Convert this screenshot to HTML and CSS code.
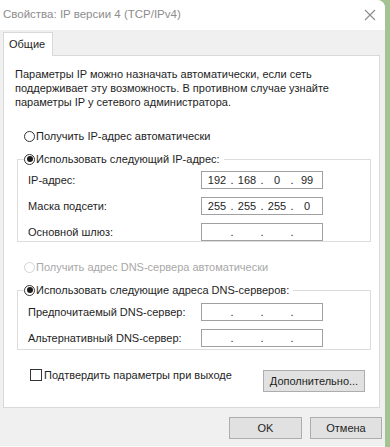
FILE: index.html
```html
<!DOCTYPE html>
<html lang="ru">
<head>
<meta charset="utf-8">
<link rel="stylesheet" href="styles.css">
</head>
<body>
<div class="window">
  <div class="titlebar">
    <span class="title">Свойства: IP версии 4 (TCP/IPv4)</span>
    <svg class="close" width="12" height="12" viewBox="0 0 12 12"><path d="M1 1L11 11M11 1L1 11" stroke="#8c8c8c" stroke-width="1.1" fill="none"/></svg>
  </div>
  <div class="body">
    <div class="tabs"><div class="tab">Общие</div></div>
    <div class="panel">
      <p class="intro">Параметры IP можно назначать автоматически, если сеть поддерживает эту возможность. В противном случае узнайте параметры IP у сетевого администратора.</p>
      <div class="option first"><span class="radio"></span>Получить IP-адрес автоматически</div>
      <fieldset class="group g1">
        <legend class="option"><span class="radio checked"></span>Использовать следующий IP-адрес:</legend>
        <div class="row"><span class="label">IP-адрес:</span><span class="ip"><span class="seg">192</span><span class="dot">.</span><span class="seg">168</span><span class="dot">.</span><span class="seg">0</span><span class="dot">.</span><span class="seg">99</span></span></div>
        <div class="row"><span class="label">Маска подсети:</span><span class="ip"><span class="seg">255</span><span class="dot">.</span><span class="seg">255</span><span class="dot">.</span><span class="seg">255</span><span class="dot">.</span><span class="seg">0</span></span></div>
        <div class="row"><span class="label">Основной шлюз:</span><span class="ip"><span class="seg"></span><span class="dot">.</span><span class="seg"></span><span class="dot">.</span><span class="seg"></span><span class="dot">.</span><span class="seg"></span></span></div>
      </fieldset>
      <div class="option disabled second"><span class="radio"></span>Получить адрес DNS-сервера автоматически</div>
      <fieldset class="group g2">
        <legend class="option"><span class="radio checked"></span>Использовать следующие адреса DNS-серверов:</legend>
        <div class="row"><span class="label">Предпочитаемый DNS-сервер:</span><span class="ip"><span class="seg"></span><span class="dot">.</span><span class="seg"></span><span class="dot">.</span><span class="seg"></span><span class="dot">.</span><span class="seg"></span></span></div>
        <div class="row"><span class="label">Альтернативный DNS-сервер:</span><span class="ip"><span class="seg"></span><span class="dot">.</span><span class="seg"></span><span class="dot">.</span><span class="seg"></span><span class="dot">.</span><span class="seg"></span></span></div>
      </fieldset>
      <div class="footer">
        <div class="check"><span class="box"></span>Подтвердить параметры при выходе</div>
        <div class="btn adv">Дополнительно...</div>
      </div>
    </div>
    <div class="actions">
      <div class="btn ok">OK</div>
      <div class="btn cancel">Отмена</div>
    </div>
  </div>
</div>
</body>
</html>
```
FILE: styles.css
```css
html, body {
  margin: 0;
  padding: 0;
}
body {
  width: 390px;
  height: 447px;
  overflow: hidden;
  background: #a4c394;
  font-family: "Liberation Sans", Arial, sans-serif;
  font-size: 11px;
  color: #1e1e1e;
}
.window {
  width: 385px;
  height: 446px;
  background: #f0f0f0;
  border-top-right-radius: 8px;
  border-bottom: 1px solid #fafafa;
  overflow: hidden;
}
.titlebar {
  height: 30px;
  background: #fff;
  display: flex;
  align-items: center;
  justify-content: space-between;
  padding: 0 9px 0 3px;
}
.title {
  font-size: 11.5px;
  color: #8d8d8d;
  margin-top: -2px;
}
.close {
  margin-top: -1px;
}
.body {
  padding: 2px 5px 0 3px;
}
.tabs {
  display: flex;
  height: 23px;
}
.tab {
  width: 43px;
  height: 23px;
  background: #fff;
  border: 1px solid #d9d9d9;
  border-bottom: none;
  padding-left: 5px;
  line-height: 23px;
  position: relative;
  z-index: 1;
}
.panel {
  height: 351px;
  background: #fff;
  border: 1px solid #d9d9d9;
  display: flex;
  flex-direction: column;
}
.intro {
  margin: 11px 0 0 11px;
  line-height: 14px;
  width: 340px;
}
.option {
  display: flex;
  align-items: center;
  height: 14px;
  white-space: nowrap;
}
.radio {
  width: 11px;
  height: 11px;
  border: 1px solid #333;
  border-radius: 50%;
  margin-right: 1px;
  box-sizing: border-box;
  display: inline-flex;
  align-items: center;
  justify-content: center;
  background: #fff;
}
.radio.checked::after {
  content: "";
  width: 6px;
  height: 6px;
  border-radius: 50%;
  background: #1a1a1a;
}
.first {
  margin: 20px 0 0 20px;
}
.second {
  margin: 18px 0 0 20px;
}
.disabled {
  color: #a8a8a8;
}
.disabled .radio {
  border-color: #d4d4d4;
}
.group {
  margin: 0 8px 0 13px;
  border: 1px solid #dcdcdc;
  padding: 0 0 0 10px;
  min-width: 0;
}
.group legend {
  padding: 0 4px 0 0;
  margin-left: -4px;
}
.g1 {
  margin-top: 9px;
  height: 90px;
  box-sizing: border-box;
  padding-top: 5px;
}
.g2 {
  margin-top: 9px;
  height: 67px;
  box-sizing: border-box;
  padding-top: 6px;
}
.row {
  display: flex;
  align-items: center;
  height: 18px;
  margin-bottom: 8px;
}
.label {
  width: 173px;
}
.ip {
  width: 122px;
  height: 18px;
  box-sizing: border-box;
  border: 1px solid #a0a0a0;
  display: flex;
  align-items: center;
  padding-left: 3px;
}
.seg {
  width: 24px;
  text-align: center;
}
.dot {
  width: 6px;
  text-align: center;
}
.footer {
  display: flex;
  align-items: flex-start;
  justify-content: space-between;
  margin: 15px 14px 0 26px;
}
.check {
  display: flex;
  align-items: center;
  margin-top: 4px;
}
.box {
  width: 12px;
  height: 12px;
  box-sizing: border-box;
  border: 1px solid #333;
  margin-right: 2px;
  background: #fff;
}
.btn {
  height: 22px;
  box-sizing: border-box;
  background: #e1e1e1;
  border: 1px solid #adadad;
  display: flex;
  align-items: center;
  justify-content: center;
}
.adv {
  width: 102px;
  margin-top: 5px;
}
.actions {
  display: flex;
  justify-content: flex-end;
  gap: 8px;
  margin-top: 9px;
  margin-right: -2px;
}
.ok {
  width: 73px;
}
.cancel {
  width: 72px;
}
```
